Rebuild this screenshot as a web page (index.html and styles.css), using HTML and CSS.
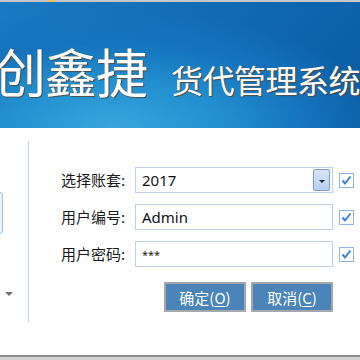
FILE: index.html
```html
<!DOCTYPE html>
<html lang="zh">
<head>
<meta charset="utf-8">
<link rel="stylesheet" href="styles.css">
</head>
<body>
<div class="window">
  <div class="topstrip"><span class="spark"></span></div>
  <div class="banner">
    <span class="brand">创鑫捷</span>
    <span class="product">货代管理系统</span>
  </div>
  <div class="main">
    <div class="side">
      <div class="sidebox"></div>
      <div class="sidearrow"></div>
    </div>
    <div class="divider"></div>
    <div class="form">
      <div class="grid">
        <label class="label">选择账套:</label>
        <div class="field combo"><span class="value">2017</span><span class="dropbtn"><span class="tri"></span></span></div>
        <span class="check"><svg viewBox="0 0 15 15" width="15" height="15"><path d="M3.5 7.5 L6 10.5 L11.5 3.5" fill="none" stroke="#3f7fd6" stroke-width="2"/></svg></span>

        <label class="label">用户编号:</label>
        <div class="field"><span class="value">Admin</span></div>
        <span class="check"><svg viewBox="0 0 15 15" width="15" height="15"><path d="M3.5 7.5 L6 10.5 L11.5 3.5" fill="none" stroke="#3f7fd6" stroke-width="2"/></svg></span>

        <label class="label">用户密码:</label>
        <div class="field"><span class="pwd">***</span></div>
        <span class="check"><svg viewBox="0 0 15 15" width="15" height="15"><path d="M3.5 7.5 L6 10.5 L11.5 3.5" fill="none" stroke="#3f7fd6" stroke-width="2"/></svg></span>
      </div>
      <div class="buttons">
        <button class="btn">确定(<u>O</u>)</button>
        <button class="btn">取消(<u>C</u>)</button>
      </div>
    </div>
  </div>
  <div class="footer"></div>
</div>
</body>
</html>
```
FILE: styles.css
```css
html, body {
  margin: 0;
  padding: 0;
  background: #ffffff;
}
body {
  width: 360px;
  height: 360px;
  overflow: hidden;
  font-family: "Noto Sans", "Noto Sans CJK SC", sans-serif;
}
.window {
  width: 360px;
  height: 360px;
  display: flex;
  flex-direction: column;
}
.topstrip {
  height: 2px;
  background: #c4c8cc;
  position: relative;
}
.spark {
  position: absolute;
  left: 47px;
  top: 0;
  width: 8px;
  height: 2px;
  background: #f0c060;
}
.banner {
  height: 126px;
  box-sizing: border-box;
  background:
    radial-gradient(ellipse 75% 95% at 32% 100%, #37a5dc 0%, #2290d0 40%, #1574bd 70%, rgba(16,100,175,0) 100%),
    linear-gradient(135deg, #1a7ac2 0%, #0f66b0 60%, #0a5aa4 100%);
  display: flex;
  align-items: baseline;
  padding-top: 43px;
  margin-left: -6px;
  color: #ffffff;
  font-family: "Noto Sans CJK SC", sans-serif;
  white-space: nowrap;
  line-height: 1;
}
.brand {
  font-size: 52px;
  letter-spacing: -1px;
  text-shadow: 0 0 1px #6a6a6a, 1px 1px 1px #4a4a4a;
}
.product {
  font-size: 32px;
  margin-left: 24px;
  letter-spacing: -0.5px;
  text-shadow: 0 0 1px #6a6a6a, 1px 1px 1px #4a4a4a;
}
.main {
  flex: 1;
  display: flex;
}
.side {
  width: 28px;
  display: flex;
  flex-direction: column;
  align-items: flex-start;
}
.sidebox {
  margin-top: 64px;
  margin-left: -40px;
  width: 41px;
  height: 40px;
  border: 1px solid #9cc6e2;
  border-radius: 3px;
  background: #eaf3fa;
}
.sidearrow {
  margin-top: 58px;
  margin-left: 5px;
  width: 0;
  height: 0;
  border-left: 4px solid transparent;
  border-right: 4px solid transparent;
  border-top: 4px solid #707070;
}
.divider {
  width: 1px;
  margin-top: 13px;
  height: 181px;
  background: #c6d2e6;
}
.form {
  padding-left: 32px;
  padding-top: 39px;
}
.grid {
  display: grid;
  grid-template-columns: 68px 198px 15px;
  column-gap: 6px;
  row-gap: 11px;
  align-items: center;
}
.label {
  font-size: 15px;
  color: #1a1a1a;
  font-family: "Noto Sans CJK SC", sans-serif;
  line-height: 20px;
  white-space: nowrap;
}
.field {
  height: 26px;
  box-sizing: border-box;
  border: 1px solid #bcd0ea;
  background: #ffffff;
  display: flex;
  align-items: center;
  padding-left: 6px;
}
.value {
  font-size: 15px;
  color: #111111;
  line-height: 20px;
}
.pwd {
  font-size: 11px;
  color: #222;
  align-self: flex-start;
  margin-top: 5px;
}
.combo {
  justify-content: space-between;
  padding-right: 2px;
}
.dropbtn {
  width: 17px;
  height: 22px;
  box-sizing: border-box;
  border: 1px solid #7f9fc9;
  border-radius: 2px;
  background: linear-gradient(#d6e4f6, #b8cfee);
  display: flex;
  align-items: center;
  justify-content: center;
}
.tri {
  width: 0;
  height: 0;
  border-left: 3px solid transparent;
  border-right: 3px solid transparent;
  border-top: 3px solid #1a2a40;
  margin-top: 2px;
}
.check {
  width: 15px;
  height: 15px;
  box-sizing: border-box;
  border: 1px solid #8fb4ea;
  background: #ffffff;
  display: flex;
}
.check svg {
  display: block;
  margin: -1px;
}
.buttons {
  display: flex;
  gap: 5px;
  margin-top: 15px;
  padding-left: 103px;
}
.btn {
  width: 82px;
  height: 30px;
  box-sizing: border-box;
  border: 2px solid #a4a8ac;
  background: #4a84b8;
  color: #ffffff;
  font-size: 15px;
  font-family: "Noto Sans CJK SC", sans-serif;
  padding: 0;
  line-height: 1;
}
.btn u {
  text-underline-offset: 2px;
}
.footer {
  height: 3px;
  border-top: 2px solid #8c8c8c;
  background: #d0d0d0;
}
```
